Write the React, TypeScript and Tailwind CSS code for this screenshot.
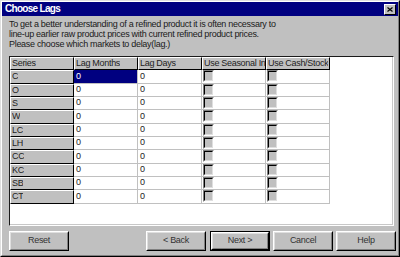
import React from "react";

const series = ["C", "O", "S", "W", "LC", "LH", "CC", "KC", "SB", "CT"];

function Raised({ children, className = "" }: { children?: React.ReactNode; className?: string }) {
  return (
    <div className={`border border-t-white border-l-white border-r-black border-b-black ${className}`}>
      <div className="w-full h-full border border-t-[#dfdfdf] border-l-[#dfdfdf] border-r-[#808080] border-b-[#808080] flex items-center justify-center">
        {children}
      </div>
    </div>
  );
}

function Button({ label, isDefault = false }: { label: string; isDefault?: boolean }) {
  if (isDefault) {
    return (
      <div className="w-[60px] h-[20px] border border-black">
        <Raised className="w-full h-full">
          <span>{label}</span>
        </Raised>
      </div>
    );
  }
  return (
    <Raised className="w-[60px] h-[20px]">
      <span>{label}</span>
    </Raised>
  );
}

function HeaderCell({ children, w }: { children?: React.ReactNode; w: string }) {
  return (
    <div
      className={`${w} h-full shrink-0 bg-[#c0c0c0] border-t border-l border-t-white border-l-white border-r border-b border-r-black border-b-black pl-[1px] flex items-center overflow-hidden whitespace-nowrap`}
    >
      <span className="overflow-hidden">{children}</span>
    </div>
  );
}

function Checkbox() {
  return (
    <div className="w-[11px] h-[12px] border border-t-[#808080] border-l-[#808080] border-r-white border-b-white">
      <div className="w-full h-full bg-[#c0c0c0] border border-t-black border-l-black border-r-[#dfdfdf] border-b-[#dfdfdf]" />
    </div>
  );
}

function DataCell({ children, selected = false }: { children?: React.ReactNode; selected?: boolean }) {
  return (
    <div
      className={`w-[64px] h-full shrink-0 border-r border-b border-r-[#c0c0c0] border-b-[#c0c0c0] flex items-center pl-[2px] ${
        selected ? "bg-[#000080] text-white" : "bg-white"
      }`}
    >
      {children}
    </div>
  );
}

function CheckCell() {
  return (
    <div className="w-[64px] h-full shrink-0 bg-white border-r border-b border-r-[#c0c0c0] border-b-[#c0c0c0] flex items-center pl-[1px]">
      <Checkbox />
    </div>
  );
}

export default function App() {
  return (
    <div className="w-[400px] h-[257px] bg-[#c0c0c0] font-['Liberation_Sans',Arial,sans-serif] text-[#222] text-[9px] tracking-[-0.3px] border border-t-[#dfdfdf] border-l-[#dfdfdf] border-r-black border-b-black">
      <div className="w-full h-full border border-t-white border-l-white border-r-[#808080] border-b-[#808080] flex flex-col">
        {/* Title bar */}
        <div className="h-[14px] shrink-0 bg-[#000080] flex items-center justify-between pl-[3px] pr-[2px]">
          <span className="text-white font-bold text-[10px] tracking-[-0.7px] leading-[14px]">Choose Lags</span>
          <div className="w-[12px] h-[11px] bg-[#c0c0c0] border border-t-white border-l-white border-r-black border-b-black flex items-center justify-center">
            <svg width="6" height="5" viewBox="0 0 6 5" className="block">
              <path d="M0.5 0.5 L5.5 4.5 M5.5 0.5 L0.5 4.5" stroke="#000" strokeWidth="1.2" fill="none" />
            </svg>
          </div>
        </div>

        {/* Instructions */}
        <div className="h-[40px] shrink-0 pl-[7px] pt-[3px] leading-[10px] text-[#1a1a1a]">
          <div>To get a better understanding of a refined product it is often necessary to</div>
          <div>line-up earlier raw product prices with current refined product prices.</div>
          <div>Please choose which markets to delay(lag.)</div>
        </div>

        {/* Grid */}
        <div className="ml-[7px] w-[385px] h-[170px] shrink-0 border-t border-l border-t-[#1a1a1a] border-l-[#1a1a1a] border-r border-b border-r-white border-b-white">
          <div className="w-full h-full bg-white border-r border-b border-r-[#c8c8c8] border-b-[#c8c8c8] flex flex-col overflow-hidden">
            <div className="h-[13.33px] flex shrink-0">
              <HeaderCell w="w-[64px]">Series</HeaderCell>
              <HeaderCell w="w-[64px]">Lag Months</HeaderCell>
              <HeaderCell w="w-[64px]">Lag Days</HeaderCell>
              <HeaderCell w="w-[64px]">Use Seasonal In</HeaderCell>
              <HeaderCell w="w-[64px]">Use Cash/Stock</HeaderCell>
            </div>
            {series.map((s, i) => (
              <div key={s} className="h-[13.33px] flex shrink-0">
                <HeaderCell w="w-[64px]">{s}</HeaderCell>
                <DataCell selected={i === 0}>0</DataCell>
                <DataCell>0</DataCell>
                <CheckCell />
                <CheckCell />
              </div>
            ))}
          </div>
        </div>

        {/* Buttons */}
        <div className="mt-[5px] h-[20px] shrink-0 flex pl-[7px] pr-[2px] text-[#333]">
          <Button label="Reset" />
          <div className="flex-1" />
          <div className="mr-[4px]">
            <Button label="< Back" />
          </div>
          <div className="mr-[3px]">
            <Button label="Next >" isDefault />
          </div>
          <div className="mr-[3px]">
            <Button label="Cancel" />
          </div>
          <Button label="Help" />
        </div>
      </div>
    </div>
  );
}
